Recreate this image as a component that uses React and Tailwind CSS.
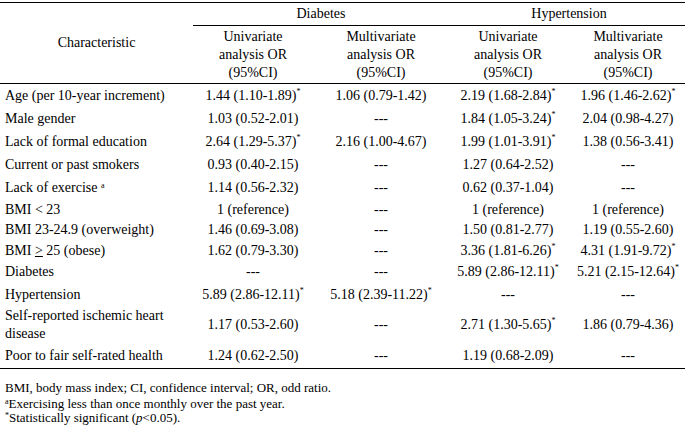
import React from 'react';

const cols = "grid grid-cols-[193px_120px_136px_118px_122px]";

const Star = () => <sup className="text-[8px] top-[-0.7em]">*</sup>;

const rows = [
    { name: "Age (per 10-year increment)", h: "h-[24px]", d1: <>1.44 (1.10-1.89)<Star /></>, d2: "1.06 (0.79-1.42)", h1: <>2.19 (1.68-2.84)<Star /></>, h2: <>1.96 (1.46-2.62)<Star /></> },
    { name: "Male gender", h: "h-[22px]", d1: "1.03 (0.52-2.01)", d2: "---", h1: <>1.84 (1.05-3.24)<Star /></>, h2: "2.04 (0.98-4.27)" },
    { name: "Lack of formal education", h: "h-[23px]", d1: <>2.64 (1.29-5.37)<Star /></>, d2: "2.16 (1.00-4.67)", h1: <>1.99 (1.01-3.91)<Star /></>, h2: "1.38 (0.56-3.41)" },
    { name: "Current or past smokers", h: "h-[23px]", d1: "0.93 (0.40-2.15)", d2: "---", h1: "1.27 (0.64-2.52)", h2: "---" },
    { name: <>Lack of exercise <sup className="text-[8px]">a</sup></>, h: "h-[23px]", d1: "1.14 (0.56-2.32)", d2: "---", h1: "0.62 (0.37-1.04)", h2: "---" },
    { name: "BMI < 23", h: "h-[21px]", d1: "1 (reference)", d2: "---", h1: "1 (reference)", h2: "1 (reference)" },
    { name: "BMI 23-24.9 (overweight)", h: "h-[20px]", d1: "1.46 (0.69-3.08)", d2: "---", h1: "1.50 (0.81-2.77)", h2: "1.19 (0.55-2.60)" },
    { name: <>BMI <span className="underline underline-offset-[1px]">&gt;</span> 25 (obese)</>, h: "h-[21px]", d1: "1.62 (0.79-3.30)", d2: "---", h1: <>3.36 (1.81-6.26)<Star /></>, h2: <>4.31 (1.91-9.72)<Star /></> },
    { name: "Diabetes", h: "h-[22px]", d1: "---", d2: "---", h1: <>5.89 (2.86-12.11)<Star /></>, h2: <>5.21 (2.15-12.64)<Star /></> },
    { name: "Hypertension", h: "h-[23px]", d1: <>5.89 (2.86-12.11)<Star /></>, d2: <>5.18 (2.39-11.22)<Star /></>, h1: "---", h2: "---" },
    { name: <>Self-reported ischemic heart<br />disease</>, h: "h-[38px]", d1: "1.17 (0.53-2.60)", d2: "---", h1: <>2.71 (1.30-5.65)<Star /></>, h2: "1.86 (0.79-4.36)" },
    { name: "Poor to fair self-rated health", h: "h-[24px]", d1: "1.24 (0.62-2.50)", d2: "---", h1: "1.19 (0.68-2.09)", h2: "---" },
];

const App = () => {
    return (
        <div className="w-[685px] h-[429px] overflow-hidden bg-white text-black font-['Liberation_Serif',serif] text-[14px] leading-[18px] pt-[2px]">
            <div className="border-t border-black">
                {/* header */}
                <div className={cols}>
                    <div className="row-span-2 flex items-center justify-center">Characteristic</div>
                    <div className="col-span-2 h-[23px] flex items-center justify-center border-b border-black">Diabetes</div>
                    <div className="col-span-2 h-[23px] flex items-center justify-center border-b border-black">Hypertension</div>
                    <div className="h-[57px] flex items-center justify-center text-center">Univariate<br />analysis OR<br />(95%CI)</div>
                    <div className="h-[57px] flex items-center justify-center text-center">Multivariate<br />analysis OR<br />(95%CI)</div>
                    <div className="h-[57px] flex items-center justify-center text-center">Univariate<br />analysis OR<br />(95%CI)</div>
                    <div className="h-[57px] flex items-center justify-center text-center">Multivariate<br />analysis OR<br />(95%CI)</div>
                </div>
                {/* body */}
                <div className="border-t border-b border-black">
                    {rows.map((r, i) => (
                        <div key={i} className={cols + " " + r.h}>
                            <div className="flex items-center pl-[5px] whitespace-nowrap"><span>{r.name}</span></div>
                            <div className="flex items-center justify-center whitespace-nowrap"><span>{r.d1}</span></div>
                            <div className="flex items-center justify-center whitespace-nowrap"><span>{r.d2}</span></div>
                            <div className="flex items-center justify-center whitespace-nowrap"><span>{r.h1}</span></div>
                            <div className="flex items-center justify-center whitespace-nowrap"><span>{r.h2}</span></div>
                        </div>
                    ))}
                </div>
            </div>
            {/* footnotes */}
            <div className="pl-[5px] pt-[10px] text-[13px] leading-[17px]">
                <p>BMI, body mass index; CI, confidence interval; OR, odd ratio.</p>
                <p className="leading-[15px]"><sup className="text-[8px]">a</sup>Exercising less than once monthly over the past year.</p>
                <p className="leading-[14px]"><sup className="text-[8px]">*</sup>Statistically significant (<i>p</i>&lt;0.05).</p>
            </div>
        </div>
    )
}

export default App
